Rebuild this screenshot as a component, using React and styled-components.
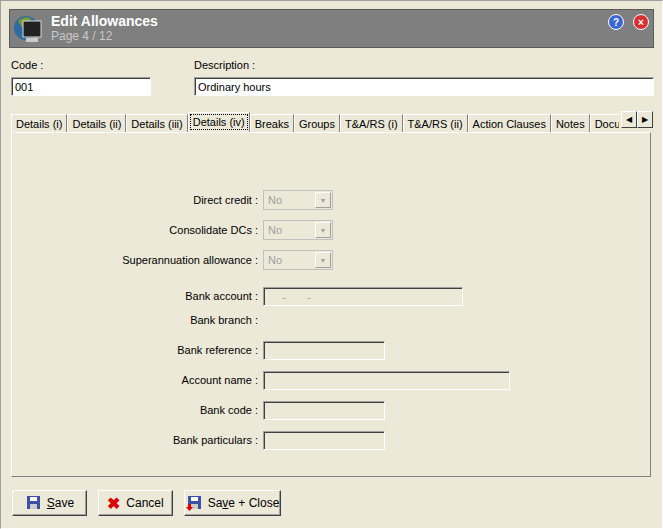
import React from 'react'
import styled, { createGlobalStyle } from 'styled-components'

const Global = createGlobalStyle`
  html, body { margin: 0; background: #ece9d8; overflow: hidden; }
  body { font: 11px "Liberation Sans", Arial, sans-serif; color: #000; }
`

const Window = styled.div`
  width: 663px; height: 529px; box-sizing: border-box;
  padding: 8px 8px 0 8px; border-right: 1px solid #fff; border-bottom: 1px solid #fff;
  border-left: 1px solid #a0a0a0; border-top: 1px solid #a0a0a0;
`
const TitleBar = styled.div`
  height: 37px; background: #7f7f7f; border: 1px solid #5a5a5a;
  display: flex; align-items: center; padding: 0 4px 0 3px; gap: 6px;
`
const TitleText = styled.div`
  flex: 1; display: flex; flex-direction: column; line-height: 15px;
  b { color: #fff; font-size: 14px; }
  span { color: #c8c8c8; font-size: 12px; }
`
const Round = styled.div`
  width: 14px; height: 14px; border-radius: 50%; background: ${p => p.$c};
  border: 1px solid #fff; color: #fff; font-size: 10px; font-weight: bold;
  display: flex; align-items: center; justify-content: center; margin-left: 3px; align-self: flex-start; margin-top: 4px;
`
const Header = styled.div`
  display: flex; gap: 43px; padding: 11px 0 0 2px;
`
const Field = styled.label`
  display: flex; flex-direction: column; gap: 6px; flex: ${p => p.$grow ? 1 : 'none'};
`
const Input = styled.div`
  height: 19px; box-sizing: border-box; width: ${p => p.$w ? p.$w + 'px' : 'auto'};
  background: ${p => p.$disabled ? '#ece9d8' : '#fff'};
  border: 1px solid #a0a0a0; border-right-color: #fff; border-bottom-color: #fff;
  box-shadow: inset 1px 1px 0 #404040; padding: 2px 3px; line-height: 14px;
  color: ${p => p.$disabled ? '#a0a0a0' : '#000'};
`
const Tabs = styled.div`
  display: flex; margin: 15px 0 0 2px; height: 21px; align-items: flex-end; position: relative;
`
const TabStrip = styled.div`
  display: flex; align-items: flex-end; width: 608px; overflow: hidden;
`
const Tab = styled.div`
  height: ${p => p.$active ? 20 : 18}px; box-sizing: border-box; padding: 3px 4px 0;
  border: 1px solid #fff; border-bottom: none; border-right: 1px solid #808080;
  white-space: nowrap; flex: none;
  ${p => p.$active && 'outline: 1px dotted #000; outline-offset: -3px;'}
`
const Arrows = styled.div`
  display: flex; align-self: flex-start; margin-left: 2px;
`
const Arrow = styled.div`
  width: 16px; height: 17px; background: #ece9d8; border: 1px solid #fff;
  border-right-color: #404040; border-bottom-color: #404040; box-sizing: border-box;
  display: flex; align-items: center; justify-content: center; font-size: 8px;
`
const Panel = styled.div`
  height: 345px; margin: 0 3px 0 2px; border: 1px solid #fff; border-right-color: #808080;
  border-bottom-color: #808080; box-sizing: border-box; padding-top: 52px;
`
const Form = styled.div`
  display: grid; grid-template-columns: 246px auto; column-gap: 5px;
  grid-auto-rows: 30px; align-items: center;
`
const Label = styled.div`
  text-align: right;
`
const Combo = styled.div`
  width: 70px; height: 20px; box-sizing: border-box; border: 1px solid #c0c0c0;
  display: flex; align-items: center; color: #a0a0a0; padding-left: 4px; justify-content: space-between;
`
const ComboBtn = styled.div`
  width: 16px; height: 16px; background: #ece9d8; border: 1px solid #fff;
  border-right-color: #a0a0a0; border-bottom-color: #a0a0a0; box-sizing: border-box; margin-right: 1px;
  display: flex; align-items: center; justify-content: center; font-size: 7px; color: #a0a0a0;
`
const Footer = styled.div`
  display: flex; gap: 11px; padding: 13px 0 0 3px;
`
const Button = styled.button`
  font: inherit; height: 26px; width: ${p => p.$w}px; background: #ece9d8;
  border: 1px solid #fff; border-right-color: #404040; border-bottom-color: #404040;
  box-shadow: inset -1px -1px 0 #a0a0a0; display: flex; align-items: center; justify-content: center; gap: 6px;
  font-size: 12px; padding: 0;
`

const Disk = ({ red }) => (
  <svg width="16" height="16" viewBox="0 0 16 16">
    <rect x="2" y="1" width="13" height="13" fill="#3d4fa6" />
    <rect x="5" y="2" width="7" height="4" fill="#fff" />
    <rect x="5" y="9" width="7" height="5" fill="#ccc" />
    {red && <path d="M0 9h3v3h2l-3.5 4L-2 12h2z" fill="#d00" transform="translate(2 0)" />}
  </svg>
)

const Combobox = () => <Combo>No<ComboBtn>▼</ComboBtn></Combo>

export default function App () {
  return (
    <Window>
      <Global />
      <TitleBar>
        <svg width="32" height="32" viewBox="0 0 32 32">
          <circle cx="13" cy="15" r="12" fill="#2d6ba0" />
          <path d="M5 8c4-4 10-5 13-2l-3 6-6 2z" fill="#7a9a3a" />
          <rect x="10" y="8" width="18" height="16" fill="#222" stroke="#ddd" />
          <rect x="13" y="25" width="12" height="4" fill="#ccc" />
        </svg>
        <TitleText><b>Edit Allowances</b><span>Page 4 / 12</span></TitleText>
        <Round $c="#3a66d8">?</Round>
        <Round $c="#d83030">×</Round>
      </TitleBar>
      <Header>
        <Field>Code :<Input $w={140}>001</Input></Field>
        <Field $grow>Description :<Input>Ordinary hours</Input></Field>
      </Header>
      <Tabs>
        <TabStrip>
          {['Details (i)', 'Details (ii)', 'Details (iii)', 'Details (iv)', 'Breaks', 'Groups', 'T&A/RS (i)', 'T&A/RS (ii)', 'Action Clauses', 'Notes', 'Documents'].map((t, i) => (
            <Tab key={t} $active={i === 3}>{t}</Tab>
          ))}
        </TabStrip>
        <Arrows><Arrow>◀</Arrow><Arrow>▶</Arrow></Arrows>
      </Tabs>
      <Panel>
        <Form>
          <Label>Direct credit :</Label><Combobox />
          <Label>Consolidate DCs :</Label><Combobox />
          <Label>Superannuation allowance :</Label><Combobox />
          <Label style={{ marginTop: 12 }}>Bank account :</Label><Input $disabled $w={200} style={{ marginTop: 12 }}>&nbsp;&nbsp;&nbsp;&nbsp;&nbsp;-&nbsp;&nbsp;&nbsp;&nbsp;&nbsp;&nbsp;&nbsp;-</Input>
          <Label>Bank branch :</Label><div />
          <Label>Bank reference :</Label><Input $disabled $w={122} />
          <Label>Account name :</Label><Input $disabled $w={247} />
          <Label>Bank code :</Label><Input $disabled $w={122} />
          <Label>Bank particulars :</Label><Input $disabled $w={122} />
        </Form>
      </Panel>
      <Footer>
        <Button $w={75}><Disk /><span><u>S</u>ave</span></Button>
        <Button $w={75}><span style={{ color: '#d00', fontWeight: 'bold', fontSize: 16 }}>✖</span>Cancel</Button>
        <Button $w={97}><Disk red /><span>Sa<u>v</u>e + Close</span></Button>
      </Footer>
    </Window>
  )
}
